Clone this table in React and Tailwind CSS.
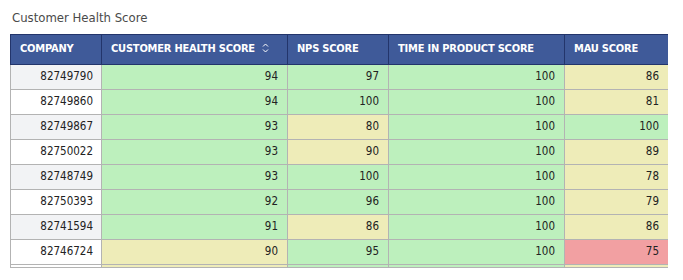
import React from 'react';

const GREEN = 'bg-[#bdf0bd]';
const YELLOW = 'bg-[#eeecb8]';
const RED = 'bg-[#f2a0a2]';

const tone = (v) => {
  if (v >= 91) return GREEN;
  if (v >= 76) return YELLOW;
  return RED;
};

const rows = [
  ['82749790', 94, 97, 100, 86],
  ['82749860', 94, 100, 100, 81],
  ['82749867', 93, 80, 100, 100],
  ['82750022', 93, 90, 100, 89],
  ['82748749', 93, 100, 100, 78],
  ['82750393', 92, 96, 100, 79],
  ['82741594', 91, 86, 100, 86],
  ['82746724', 90, 95, 100, 75],
];

// next row, only its top sliver shows under the clip
const peek = ['bg-white', YELLOW, GREEN, GREEN, YELLOW];

const SortIcon = () => (
  <svg width="7" height="10" viewBox="0 0 7 10" className="inline-block ml-[7px] -mt-[2px]">
    <path d="M1 3.5 L3.5 1 L6 3.5" fill="none" stroke="white" strokeWidth="1" />
    <path d="M1 6.5 L3.5 9 L6 6.5" fill="none" stroke="white" strokeWidth="1" />
  </svg>
);

const headers = [
  { label: 'COMPANY', w: 'w-[91px]' },
  { label: 'CUSTOMER HEALTH SCORE', w: 'w-[186px]', sort: true },
  { label: 'NPS SCORE', w: 'w-[101px]' },
  { label: 'TIME IN PRODUCT SCORE', w: 'w-[176px]' },
  { label: 'MAU SCORE', w: 'w-[104px]' },
];

export default function App() {
  return (
    <div className="w-[683px] h-[280px] bg-white font-['DejaVu_Sans_Condensed','Liberation_Sans',sans-serif] overflow-hidden">
      <div className="pl-[12px] pt-[8px] h-[34px] text-[13px] text-[#4a4a4a]">Customer Health Score</div>
      <div className="ml-[10px] w-[658px] h-[234px] overflow-hidden border-b border-[#b3b3b3]">
        <table className="w-[658px] border-collapse table-fixed text-[11.5px]">
          <thead>
            <tr className="h-[30px]">
              {headers.map((h) => (
                <th
                  key={h.label}
                  className={`${h.w} bg-[#3f5a99] border border-[#23356b] text-left pl-[9px] text-white font-bold text-[11px] tracking-[-0.2px]`}
                >
                  {h.label}
                  {h.sort && <SortIcon />}
                </th>
              ))}
            </tr>
          </thead>
          <tbody>
            {rows.map((r, i) => (
              <tr key={r[0]} className="h-[25px]">
                <td
                  className={`border border-[#b3b3b3] text-right pr-[8px] text-[#222] ${
                    i % 2 === 0 ? 'bg-[#f2f3f5]' : 'bg-white'
                  }`}
                >
                  {r[0]}
                </td>
                {r.slice(1).map((v, j) => (
                  <td
                    key={j}
                    className={`border border-[#b3b3b3] text-right pr-[9px] text-[#222] ${tone(v)}`}
                  >
                    {v}
                  </td>
                ))}
              </tr>
            ))}
            <tr className="h-[25px]">
              {peek.map((c, j) => (
                <td key={j} className={`border border-[#b3b3b3] ${c}`} />
              ))}
            </tr>
          </tbody>
        </table>
      </div>
    </div>
  );
}
